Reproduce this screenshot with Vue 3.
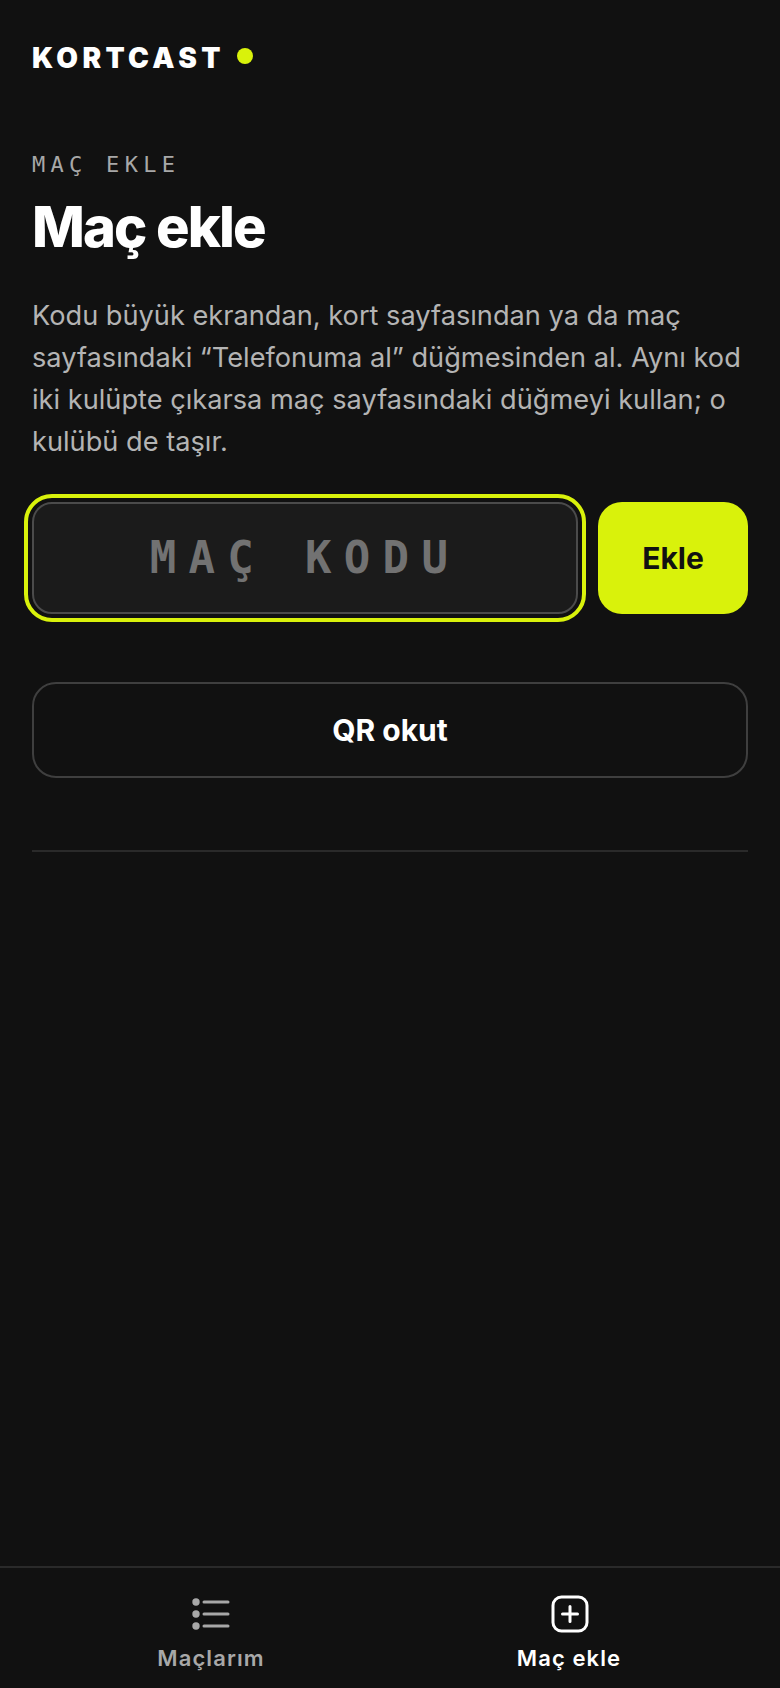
<template>
  <div class="app">
    <header class="brand">
      <span class="brand-name">KORTCAST</span>
      <span class="brand-dot"></span>
    </header>
    <main class="main">
      <p class="eyebrow">MAÇ EKLE</p>
      <h1 class="title">Maç ekle</h1>
      <p class="lead">Kodu büyük ekrandan, kort sayfasından ya da maç sayfasındaki “Telefonuma al” düğmesinden al. Aynı kod iki kulüpte çıkarsa maç sayfasındaki düğmeyi kullan; o kulübü de taşır.</p>
      <form class="code-form" @submit.prevent>
        <input class="code-input" type="text" placeholder="MAÇ KODU" />
        <button class="add-btn" type="submit">Ekle</button>
      </form>
      <button class="qr-btn" type="button">QR okut</button>
      <hr class="divider" />
    </main>
    <nav class="tabs">
      <a class="tab">
        <svg class="tab-icon" viewBox="0 0 40 40" fill="none" stroke="currentColor" stroke-width="3" stroke-linecap="round">
          <path d="M13 8h24M13 20h24M13 32h24" />
          <circle cx="5" cy="8" r="3.7" fill="currentColor" stroke="none" />
          <circle cx="5" cy="20" r="3.7" fill="currentColor" stroke="none" />
          <circle cx="5" cy="32" r="3.7" fill="currentColor" stroke="none" />
        </svg>
        <span>Maçlarım</span>
      </a>
      <a class="tab tab-active">
        <svg class="tab-icon tab-icon-add" viewBox="0 0 40 40" fill="none" stroke="currentColor" stroke-width="3" stroke-linecap="round">
          <rect x="3" y="3" width="34" height="34" rx="8.5" />
          <path d="M20 12.5v15M12.5 20h15" />
        </svg>
        <span>Maç ekle</span>
      </a>
    </nav>
  </div>
</template>

<script setup>
</script>

<style>
html, body { margin: 0; background: #111111; }
</style>

<style scoped>
.app {
  width: 780px;
  height: 1688px;
  display: flex;
  flex-direction: column;
  background: #111111;
  color: #fff;
  font-family: Inter, "Noto Sans", sans-serif;
  box-sizing: border-box;
}
.brand {
  display: flex;
  align-items: center;
  gap: 12px;
  padding: 41px 32px 0;
  height: 34px;
}
.brand-name {
  font-size: 28px;
  font-weight: 900;
  letter-spacing: 0.155em;
  line-height: 34px;
}
.brand-dot {
  width: 16px;
  height: 16px;
  border-radius: 50%;
  background: #d9f20b;
  margin-bottom: 4px;
}
.main {
  flex: 1;
  padding: 74px 32px 0;
}
.eyebrow {
  margin: 0;
  font-family: "DejaVu Sans Mono", monospace;
  font-size: 22px;
  line-height: 32px;
  letter-spacing: 0.24em;
  color: #a8a8a8;
}
.title {
  margin: 14px 0 0;
  font-size: 56px;
  line-height: 64px;
  font-weight: 800;
  letter-spacing: -0.033em;
}
.lead {
  margin: 36px 0 0;
  font-size: 27.2px;
  line-height: 42.16px;
  color: #b4b4b4;
}
.code-form {
  display: flex;
  gap: 20px;
  margin-top: 38px;
}
.code-input {
  flex: 1;
  min-width: 0;
  height: 112px;
  box-sizing: border-box;
  background: #1b1b1b;
  border: 2px solid #4b4b4b;
  border-radius: 20px;
  outline: 4px solid #d9f20b;
  outline-offset: 4px;
  color: #fff;
  text-align: center;
  font-family: "DejaVu Sans Mono", monospace;
  font-weight: 700;
  font-size: 44px;
  letter-spacing: 0.28em;
}
.code-input::placeholder {
  color: #727272;
  opacity: 1;
}
.add-btn {
  width: 150px;
  height: 112px;
  border: 0;
  border-radius: 24px;
  background: #d9f20b;
  color: #111;
  font-family: inherit;
  font-size: 30px;
  font-weight: 700;
}
.qr-btn {
  display: block;
  width: 100%;
  height: 96px;
  margin-top: 68px;
  background: transparent;
  border: 2px solid #3f3f3f;
  border-radius: 24px;
  color: #fff;
  font-family: inherit;
  font-size: 30px;
  font-weight: 700;
}
.divider {
  margin: 72px 0 0;
  border: 0;
  border-top: 2px solid #2a2a2a;
}
.tabs {
  display: grid;
  grid-template-columns: 1fr 1fr;
  height: 120px;
  padding: 0 32px;
  border-top: 2px solid #2a2a2a;
  box-sizing: content-box;
}
.tab {
  display: flex;
  flex-direction: column;
  align-items: center;
  gap: 11px;
  padding-top: 26px;
  color: #a8a8a8;
  font-size: 22px;
  font-weight: 600;
  letter-spacing: 0.05em;
}
.tab-active { color: #fff; }
.tab-icon {
  width: 40px;
  height: 40px;
}
.tab-icon-add {
  margin-left: 2px;
}
</style>
